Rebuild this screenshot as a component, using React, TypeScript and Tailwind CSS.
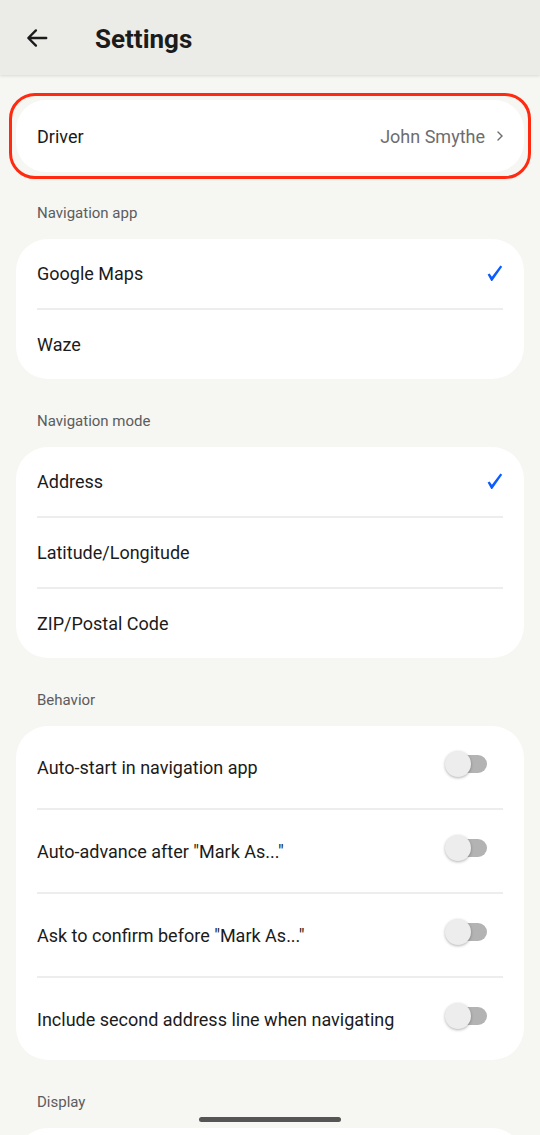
import React, { useState } from "react";

const font = { fontFamily: "Roboto, 'Noto Sans', sans-serif" };

function Check() {
  return (
    <svg width="16" height="17" viewBox="0 0 16 17" className="shrink-0 block">
      <path
        d="M0.6 9.6 L2.6 8.4 L4.9 11.8 L13.4 0.6 L15.2 1.7 L5.2 16 L4.2 16 Z"
        fill="#0b5cff"
      />
    </svg>
  );
}

function Toggle({ on, onClick }: { on: boolean; onClick: () => void }) {
  return (
    <button onClick={onClick} className="relative w-[44px] h-[26px] shrink-0">
      <span className="absolute left-[8px] top-[4px] w-[34px] h-[18px] rounded-full bg-[#b3b3b3]" />
      <span
        className={`absolute top-0 w-[26px] h-[26px] rounded-full bg-[#ededed] shadow-[0_1px_3px_rgba(0,0,0,0.3)] ${
          on ? "left-[18px]" : "left-0"
        }`}
      />
    </button>
  );
}

function SectionLabel({ first, children }: { first?: boolean; children: React.ReactNode }) {
  return (
    <div
      className={`px-[37px] pb-[17px] text-[15px] text-[#5c5c5e] leading-[18px] ${
        first ? "pt-[25px]" : "pt-[33px]"
      }`}
    >
      {children}
    </div>
  );
}

function Divider() {
  return <div className="mx-[21px] h-[2px] bg-[#ededed]" />;
}

export default function App() {
  const [navApp, setNavApp] = useState("Google Maps");
  const [navMode, setNavMode] = useState("Address");
  const [toggles, setToggles] = useState([false, false, false, false]);

  const apps = ["Google Maps", "Waze"];
  const modes = ["Address", "Latitude/Longitude", "ZIP/Postal Code"];
  const behaviors = [
    "Auto-start in navigation app",
    'Auto-advance after "Mark As..."',
    'Ask to confirm before "Mark As..."',
    "Include second address line when navigating",
  ];

  return (
    <div className="relative w-[540px] h-[1135px] overflow-hidden bg-[#f6f6f2]" style={font}>
      {/* Header */}
      <div className="h-[75px] bg-[#ebebe7] flex items-center shadow-[0_1px_3px_rgba(0,0,0,0.12)] relative z-10">
        <svg width="26" height="26" viewBox="0 0 24 24" className="ml-[24px]">
          <path
            d="M20.5 12H4.5 M11 5 L4 12 L11 19"
            fill="none"
            stroke="#1b1b1b"
            strokeWidth="2.2"
            strokeLinecap="round"
            strokeLinejoin="round"
          />
        </svg>
        <h1 className="ml-[45px] mt-[3px] text-[26px] font-bold text-[#1b1b1b]">Settings</h1>
      </div>

      {/* Driver */}
      <div className="mt-[18px] mx-[9px] rounded-[26px] border-[3px] border-[#ff2a0f] p-[4px]">
        <div className="h-[72px] bg-white rounded-[30px] flex items-center pl-[21px] pr-[20px]">
          <span className="text-[18px] text-[#1b1b1b]">Driver</span>
          <span className="ml-auto text-[18px] text-[#6d6d70]">John Smythe</span>
          <svg width="8" height="12" viewBox="0 0 8 12" className="ml-[11px]">
            <path d="M2 2 L6 6 L2 10" fill="none" stroke="#6d6d70" strokeWidth="1.4" strokeLinecap="round" />
          </svg>
        </div>
      </div>

      <SectionLabel first>Navigation app</SectionLabel>
      <div className="mx-[16px] bg-white rounded-[32px] overflow-hidden">
        {apps.map((a, i) => (
          <React.Fragment key={a}>
            {i > 0 && <Divider />}
            <button
              onClick={() => setNavApp(a)}
              className="w-full h-[69px] flex items-center pl-[21px] pr-[21px] text-left"
            >
              <span className="text-[18px] text-[#1b1b1b]">{a}</span>
              <span className="ml-auto">{navApp === a && <Check />}</span>
            </button>
          </React.Fragment>
        ))}
      </div>

      <SectionLabel>Navigation mode</SectionLabel>
      <div className="mx-[16px] bg-white rounded-[32px] overflow-hidden">
        {modes.map((m, i) => (
          <React.Fragment key={m}>
            {i > 0 && <Divider />}
            <button
              onClick={() => setNavMode(m)}
              className="w-full h-[69px] flex items-center pl-[21px] pr-[21px] text-left"
            >
              <span className="text-[18px] text-[#1b1b1b]">{m}</span>
              <span className="ml-auto">{navMode === m && <Check />}</span>
            </button>
          </React.Fragment>
        ))}
      </div>

      <SectionLabel>Behavior</SectionLabel>
      <div className="mx-[16px] bg-white rounded-[32px] overflow-hidden">
        {behaviors.map((b, i) => (
          <React.Fragment key={b}>
            {i > 0 && <Divider />}
            <div className="h-[82px] flex items-center pl-[21px] pr-[35px]">
              <span className="text-[18px] text-[#1b1b1b]">{b}</span>
              <span className="ml-auto">
                <Toggle
                  on={toggles[i]}
                  onClick={() => setToggles(toggles.map((t, j) => (j === i ? !t : t)))}
                />
              </span>
            </div>
          </React.Fragment>
        ))}
      </div>

      <SectionLabel>Display</SectionLabel>
      <div className="mx-[16px] h-[80px] bg-white rounded-[32px]" />

      {/* Home indicator */}
      <div className="absolute left-[199px] bottom-[13px] w-[142px] h-[5px] rounded-full bg-[#555555]" />
    </div>
  );
}
